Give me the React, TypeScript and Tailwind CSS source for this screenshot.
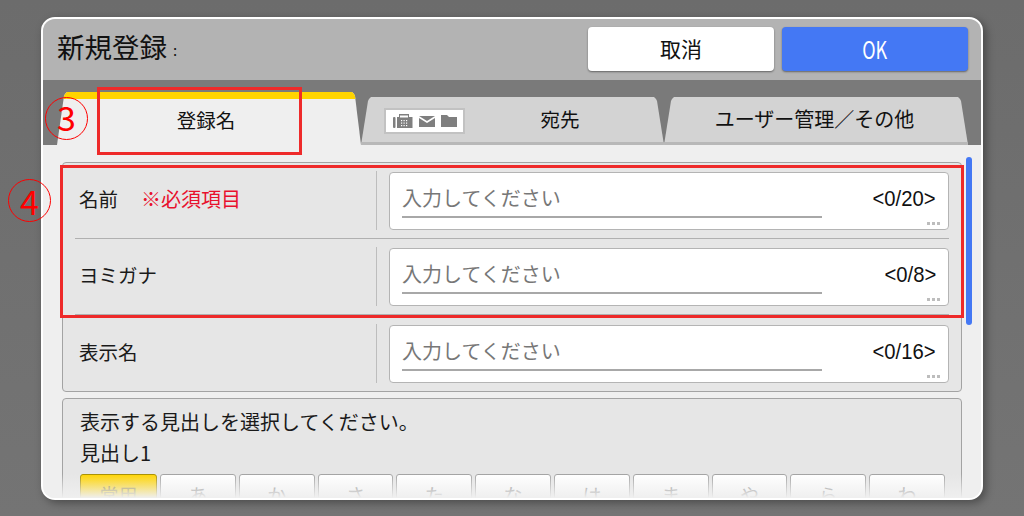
const font = { fontFamily: '"Noto Sans CJK JP", sans-serif' };

function FaxIcon() {
  return (
    <svg width="20" height="14" viewBox="0 0 20 14" fill="#7f7f7f">
      <rect x="0" y="3" width="2.5" height="11" rx="1" />
      <path d="M4 3h2V0h10v3h3.5v11H4z" />
      <rect x="7" y="1.5" width="8" height="2" fill="#fff" />
      <g fill="#fff">
        <rect x="8" y="6" width="1.2" height="1.2" />
        <rect x="10.5" y="6" width="1.2" height="1.2" />
        <rect x="13" y="6" width="1.2" height="1.2" />
        <rect x="8" y="8.5" width="1.2" height="1.2" />
        <rect x="10.5" y="8.5" width="1.2" height="1.2" />
        <rect x="13" y="8.5" width="1.2" height="1.2" />
        <rect x="8" y="11" width="1.2" height="1.2" />
        <rect x="10.5" y="11" width="1.2" height="1.2" />
        <rect x="13" y="11" width="1.2" height="1.2" />
      </g>
    </svg>
  );
}

function MailIcon() {
  return (
    <svg width="16" height="11" viewBox="0 0 16 11" fill="#7f7f7f">
      <path d="M0 0h16L8 5z" />
      <path d="M0 2l8 5 8-5v9H0z" />
    </svg>
  );
}

function FolderIcon() {
  return (
    <svg width="16" height="12" viewBox="0 0 16 12" fill="#7f7f7f">
      <path d="M0 0h6l2 2h8v10H0z" />
    </svg>
  );
}

function InputRow({ label, count, required }: { label: string; count: string; required?: boolean }) {
  return (
    <div className="flex h-[76px] items-center">
      <div className="flex h-[59px] w-[302px] items-center border-r border-[#bdbdbd] pb-[3px] pl-[4px]">
        <span className="text-[19.5px] text-[#1a1a1a]">{label}</span>
        {required && <span className="ml-[23px] text-[20px] text-[#e8112d]">※必須項目</span>}
      </div>
      <div className="relative ml-[12px] mt-[1px] h-[58px] flex-1 rounded-[4px] border border-[#b4b4b4] bg-white">
        <div className="ml-[12px] mt-[7px] h-[38px] w-[420px] border-b-2 border-[#a8a8a8] text-[20px] leading-[36px] text-[#777777]">
          入力してください
        </div>
        <span className="absolute right-[12px] top-[8px] origin-right scale-x-[0.92] font-['Liberation_Sans'] text-[22px] leading-[36px] text-[#111111]">
          {count}
        </span>
        <span className="absolute bottom-[4px] right-[8px] text-[0px]">
          <span className="flex gap-[2px]">
            <i className="h-[3px] w-[3px] bg-[#bdbdbd]" />
            <i className="h-[3px] w-[3px] bg-[#bdbdbd]" />
            <i className="h-[3px] w-[3px] bg-[#bdbdbd]" />
          </span>
        </span>
      </div>
    </div>
  );
}

const kana = ["あ", "か", "さ", "た", "な", "は", "ま", "や", "ら", "わ"];

export default function App() {
  return (
    <div
      className="relative h-[516px] w-[1024px] overflow-hidden bg-gradient-to-b from-[#6c6c6c] to-[#747474] pl-[41px] pt-[17px]"
      style={font}
    >
      <div className="relative h-[483px] w-[942px] overflow-hidden rounded-[14px] border-2 border-white bg-[#efefef] shadow-[3px_3px_8px_rgba(0,0,0,0.35)]">
        {/* Header */}
        <div className="flex h-[61px] items-start justify-between bg-[#b3b3b3] pl-[14px] pr-[13px] pt-[8px]">
          <div className="-mt-[1px] flex items-end text-[27.5px] leading-[40px] text-[#111111]">
            新規登録<span className="ml-[6px] text-[15px] leading-[32px]">:</span>
          </div>
          <div className="flex gap-[8px]">
            <div className="flex h-[44px] w-[186px] items-center justify-center rounded-[4px] bg-white text-[21px] text-[#111111] shadow-[0_1px_2px_rgba(0,0,0,0.45)]">
              取消
            </div>
            <div className="flex h-[44px] w-[186px] items-center justify-center rounded-[4px] bg-[#4478f4] text-[24px] text-white shadow-[0_1px_2px_rgba(0,0,0,0.45)]">
              <span className="inline-block scale-x-[0.75]">OK</span>
            </div>
          </div>
        </div>

        {/* Tabs */}
        <div className="flex h-[65px] items-end bg-[#7a7a7a] pl-[14px]">
          <div className="h-[53px] w-[304px] bg-[#efefef] [clip-path:polygon(0_53px,7px_4px,8px_2px,10px_0,295px_0,297px_2px,298px_4px,304px_53px)]">
            <div className="h-[7px] bg-[#ffd400]" />
            <div className="pr-[6px] pt-[7px] text-center text-[19.5px] leading-[28px] text-[#111111]">登録名</div>
          </div>
          <div className="flex h-[48px] w-[303px] border-b-[3px] border-[#b8b8b8] bg-[#d3d3d3] pl-[23px] [clip-path:polygon(0_48px,7px_4px,8px_2px,10px_0,293px_0,295px_2px,296px_4px,303px_48px)]">
            <div className="mt-[11px] flex h-[26px] w-[81px] items-center justify-center gap-[6px] border-2 border-[#c2c2c2] bg-white">
              <FaxIcon />
              <MailIcon />
              <FolderIcon />
            </div>
            <div className="w-[190px] pt-[8px] text-center text-[19.5px] leading-[28px] text-[#111111]">宛先</div>
          </div>
          <div className="h-[48px] w-[304px] border-b-[3px] border-[#b8b8b8] bg-[#d3d3d3] pr-[3px] pt-[8px] text-center text-[20px] leading-[28px] text-[#111111] [clip-path:polygon(0_48px,7px_4px,8px_2px,10px_0,294px_0,296px_2px,297px_4px,304px_48px)]">
            ユーザー管理／その他
          </div>
        </div>

        {/* Form body */}
        <div className="relative px-[19px] pt-[17px]">
          <div className="w-[900px] rounded-[4px] border border-[#a3a3a3] bg-[#e6e6e6] px-[12px]">
            <div className="divide-y divide-[#b0b0b0]">
              <InputRow label="名前" count="<0/20>" required />
              <InputRow label="ヨミガナ" count="<0/8>" />
              <InputRow label="表示名" count="<0/16>" />
            </div>
          </div>
          <div className="mt-[6px] h-[120px] w-[900px] rounded-[4px] border border-[#a3a3a3] bg-[#e6e6e6] px-[17px] pt-[7px]">
            <p className="text-[20px] leading-[31px] text-[#1a1a1a]">表示する見出しを選択してください。</p>
            <p className="text-[20px] leading-[31px] text-[#1a1a1a]">見出し1</p>
            <div className="mt-[6px] grid w-[865px] grid-cols-[77px_repeat(10,minmax(0,1fr))] gap-[3px]">
              <div className="h-[50px] rounded-t-[3px] border border-[#a89000] bg-[#ffd400] pt-[6px] text-center text-[19px] text-[#8a7a20]">
                常用
              </div>
              {kana.map((k) => (
                <div
                  key={k}
                  className="h-[50px] rounded-t-[3px] border border-[#a3a3a3] bg-white pt-[6px] text-center text-[19px] text-[#777777]"
                >
                  {k}
                </div>
              ))}
            </div>
          </div>
          {/* scroll bar */}
          <div className="absolute left-[923px] top-[12px] h-[168px] w-[6px] rounded-full bg-[#4478f4]" />
        </div>

        {/* bottom fade */}
        <div className="absolute bottom-0 left-0 h-[24px] w-full bg-gradient-to-b from-[#efefef00] to-[#efefef]" />
      </div>

      {/* Annotations */}
      <div className="absolute left-[97px] top-[87px] h-[68px] w-[205px] border-[3px] border-[#ee2a2a]" />
      <div className="absolute left-[60px] top-[165px] h-[153px] w-[904px] border-[3px] border-[#ee2a2a]" />
      <div className="absolute left-[45px] top-[97px] flex h-[43px] w-[43px] items-center justify-center rounded-full border border-[#ff0000] pb-[3px] text-[34px] leading-none text-[#ff0000]">
        3
      </div>
      <div className="absolute left-[8px] top-[179px] flex h-[43px] w-[43px] items-center justify-center rounded-full border border-[#ff0000] text-[34px] leading-none text-[#ff0000]">
        4
      </div>
    </div>
  );
}
